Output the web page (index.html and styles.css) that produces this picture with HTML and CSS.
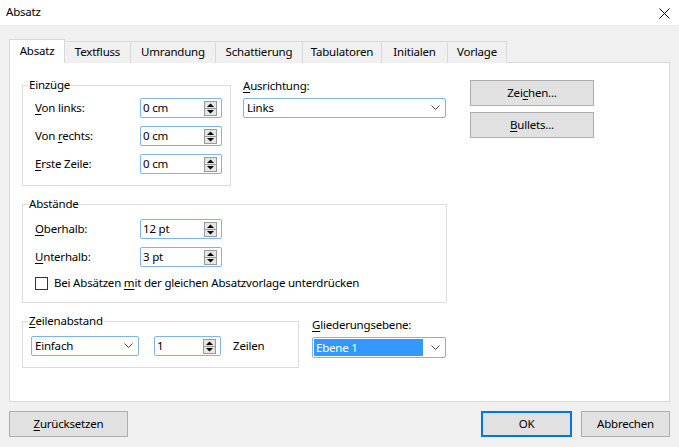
FILE: index.html
```html
<!DOCTYPE html>
<html>
<head>
<meta charset="utf-8">
<link rel="stylesheet" href="styles.css">
</head>
<body>
<div class="dialog">
  <div class="titlebar">
    <span class="title">Absatz</span>
    <svg class="close" width="11" height="11" viewBox="0 0 11 11"><path d="M0.5 0.5L10.5 10.5M10.5 0.5L0.5 10.5" stroke="#000" stroke-width="1" fill="none"/></svg>
  </div>
  <div class="main">
    <div class="tabs">
      <div class="tab sel w-absatz">Absatz</div>
      <div class="tab w-textfluss">Textfluss</div>
      <div class="tab w-umrandung">Umrandung</div>
      <div class="tab w-schatt">Schattierung</div>
      <div class="tab w-tab">Tabulatoren</div>
      <div class="tab w-init">Initialen</div>
      <div class="tab w-vorlage">Vorlage</div>
    </div>
    <div class="panel">
      <div class="row1">
        <fieldset class="grp einz">
          <legend>Einzüge</legend>
          <div class="field"><span class="lbl"><u>V</u>on links:</span><div class="spin w82"><span class="val">0 cm</span><svg width="13" height="15" viewBox="0 0 13 15"><rect x="0.5" y="0.5" width="12" height="14" fill="#e6e6e6" stroke="#9a9a9a"/><line x1="1" y1="7.5" x2="12" y2="7.5" stroke="#9a9a9a"/><path d="M3 6L6.5 2.5L10 6Z" fill="#000"/><path d="M3 9L6.5 12.5L10 9Z" fill="#000"/></svg></div></div>
          <div class="field"><span class="lbl">Von <u>r</u>echts:</span><div class="spin w82"><span class="val">0 cm</span><svg width="13" height="15" viewBox="0 0 13 15"><rect x="0.5" y="0.5" width="12" height="14" fill="#e6e6e6" stroke="#9a9a9a"/><line x1="1" y1="7.5" x2="12" y2="7.5" stroke="#9a9a9a"/><path d="M3 6L6.5 2.5L10 6Z" fill="#000"/><path d="M3 9L6.5 12.5L10 9Z" fill="#000"/></svg></div></div>
          <div class="field"><span class="lbl"><u>E</u>rste Zeile:</span><div class="spin w82"><span class="val">0 cm</span><svg width="13" height="15" viewBox="0 0 13 15"><rect x="0.5" y="0.5" width="12" height="14" fill="#e6e6e6" stroke="#9a9a9a"/><line x1="1" y1="7.5" x2="12" y2="7.5" stroke="#9a9a9a"/><path d="M3 6L6.5 2.5L10 6Z" fill="#000"/><path d="M3 9L6.5 12.5L10 9Z" fill="#000"/></svg></div></div>
        </fieldset>
        <div class="col-align">
          <div class="clabel"><u>A</u>usrichtung:</div>
          <div class="select sel-align"><span class="val">Links</span><svg width="9" height="6" viewBox="0 0 9 6"><path d="M0.5 0.5L4.5 4.5L8.5 0.5" fill="none" stroke="#444"/></svg></div>
        </div>
        <div class="col-btns">
          <div class="btn">Zei<u>c</u>hen...</div>
          <div class="btn"><u>B</u>ullets...</div>
        </div>
      </div>
      <fieldset class="grp abst">
        <legend>Abstände</legend>
        <div class="field"><span class="lbl"><u>O</u>berhalb:</span><div class="spin w82"><span class="val">12 pt</span><svg width="13" height="15" viewBox="0 0 13 15"><rect x="0.5" y="0.5" width="12" height="14" fill="#e6e6e6" stroke="#9a9a9a"/><line x1="1" y1="7.5" x2="12" y2="7.5" stroke="#9a9a9a"/><path d="M3 6L6.5 2.5L10 6Z" fill="#000"/><path d="M3 9L6.5 12.5L10 9Z" fill="#000"/></svg></div></div>
        <div class="field"><span class="lbl"><u>U</u>nterhalb:</span><div class="spin w82"><span class="val">3 pt</span><svg width="13" height="15" viewBox="0 0 13 15"><rect x="0.5" y="0.5" width="12" height="14" fill="#e6e6e6" stroke="#9a9a9a"/><line x1="1" y1="7.5" x2="12" y2="7.5" stroke="#9a9a9a"/><path d="M3 6L6.5 2.5L10 6Z" fill="#000"/><path d="M3 9L6.5 12.5L10 9Z" fill="#000"/></svg></div></div>
        <div class="check"><span class="box"></span><span>Bei Absätzen <u>m</u>it der gleichen Absatzvorlage unterdrücken</span></div>
      </fieldset>
      <div class="row3">
        <fieldset class="grp zeil">
          <legend><u>Z</u>eilenabstand</legend>
          <div class="zrow">
            <div class="select sel-einfach"><span class="val">Einfach</span><svg width="9" height="6" viewBox="0 0 9 6"><path d="M0.5 0.5L4.5 4.5L8.5 0.5" fill="none" stroke="#444"/></svg></div>
            <div class="spin w67"><span class="val">1</span><svg width="13" height="15" viewBox="0 0 13 15"><rect x="0.5" y="0.5" width="12" height="14" fill="#e6e6e6" stroke="#9a9a9a"/><line x1="1" y1="7.5" x2="12" y2="7.5" stroke="#9a9a9a"/><path d="M3 6L6.5 2.5L10 6Z" fill="#000"/><path d="M3 9L6.5 12.5L10 9Z" fill="#000"/></svg></div>
            <span class="zeilen">Zeilen</span>
          </div>
        </fieldset>
        <div class="col-glied">
          <div class="clabel"><u>G</u>liederungsebene:</div>
          <div class="select sel-glied"><span class="hl">Ebene 1</span><svg width="9" height="6" viewBox="0 0 9 6"><path d="M0.5 0.5L4.5 4.5L8.5 0.5" fill="none" stroke="#444"/></svg></div>
        </div>
      </div>
    </div>
    <div class="footer">
      <div class="btn fbtn reset"><u>Z</u>urücksetzen</div>
      <div class="right">
        <div class="btn fbtn ok">OK</div>
        <div class="btn fbtn cancel">Abbrechen</div>
      </div>
    </div>
  </div>
</div>
</body>
</html>
```

FILE: styles.css
```css
body {
  margin: 0;
  font-family: "Noto Sans", "DejaVu Sans", sans-serif;
  font-size: 11.5px;
  letter-spacing: -0.2px;
  line-height: 16px;
  color: #000;
}
u { text-decoration-thickness: 1px; text-underline-offset: 2px; }
.dialog {
  width: 679px;
  height: 447px;
  background: #f0f0f0;
  display: flex;
  flex-direction: column;
  overflow: hidden;
}
.titlebar {
  height: 25px;
  background: #fff;
  display: flex;
  align-items: center;
  justify-content: space-between;
  padding: 0 9px 0 6px;
  flex: none;
}
.title { margin-top: -1px; }
.close { margin-top: 1px; }
.main {
  padding: 14px 0 0 9px;
  flex: 1;
}
.tabs {
  display: flex;
  align-items: flex-end;
  height: 24px;
}
.tab {
  box-sizing: border-box;
  height: 22px;
  border: 1px solid #d9d9d9;
  border-bottom: none;
  margin-left: -1px;
  display: flex;
  align-items: center;
  justify-content: center;
  background: #f0f0f0;
  padding-bottom: 1px;
}
.tab.sel {
  height: 24px;
  margin-left: 0;
  background: #fff;
  position: relative;
  z-index: 1;
  padding-bottom: 2px;
}
.w-absatz { width: 56px; }
.w-textfluss { width: 67px; }
.w-umrandung { width: 86px; }
.w-schatt { width: 88px; }
.w-tab { width: 80px; }
.w-init { width: 67px; }
.w-vorlage { width: 60px; }

.panel {
  margin-top: -1px;
  width: 661px;
  height: 340px;
  box-sizing: border-box;
  border: 1px solid #d9d9d9;
  background: #fff;
  padding: 14px 0 0 12px;
}
.row1 { display: flex; align-items: flex-start; }
.grp {
  margin: 0;
  border: 1px solid #dcdcdc;
  box-sizing: border-box;
  min-width: 0;
}
.grp legend { padding: 0 1px; line-height: 16px; }
.einz { width: 209px; padding: 5px 7px 11px 5px; }
.einz .field, .abst .field, .abst .check { margin-left: 7px; }
.field { display: flex; align-items: center; height: 20px; }
.field + .field { margin-top: 8px; }
.lbl { width: 105px; flex: none; }

.spin, .select {
  box-sizing: border-box;
  height: 20px;
  border: 1px solid #7eb4ea;
  border-radius: 2px;
  background: #fff;
  display: flex;
  align-items: center;
  justify-content: space-between;
}
.spin { padding: 0 4px 0 2px; }
.spin svg { display: block; }
.w82 { width: 82px; }
.w67 { width: 67px; }
.select { padding: 0 5px 0 3px; }
.select svg { display: block; }

.col-align { width: 203px; margin-left: 12px; }
.clabel { margin-top: 1px; }
.col-align .select { margin-top: 4px; }
.col-btns { width: 124px; margin-left: 24px; padding-top: 3px; }
.btn {
  box-sizing: border-box;
  height: 26px;
  border: 1px solid #adadad;
  background: #e1e1e1;
  display: flex;
  align-items: center;
  justify-content: center;
}
.col-btns .btn + .btn { margin-top: 6px; }

.abst {
  width: 425px;
  margin-top: 10px;
  padding: 7px 0 11px 5px;
}
.check { display: flex; align-items: center; margin-top: 8px; height: 16px; }
.box {
  box-sizing: border-box;
  width: 13px;
  height: 13px;
  border: 1px solid #333;
  background: #fff;
  margin-right: 6px;
}

.row3 { display: flex; align-items: flex-start; margin-top: 10px; }
.zeil { width: 277px; padding: 7px 0 11px 5px; }
.zrow { display: flex; align-items: center; padding-left: 3px; }
.sel-einfach { width: 108px; }
.zrow .spin { margin-left: 15px; }
.zeilen { margin-left: 12px; }

.col-glied { width: 134px; margin-left: 13px; }
.col-glied .clabel { margin-top: 4px; }
.sel-glied { margin-top: 4px; height: 21px; padding: 0 5px 0 1px; }
.hl {
  background: #3399ff;
  color: #fff;
  width: 109px;
  height: 17px;
  line-height: 17px;
  padding-left: 2px;
  box-sizing: border-box;
}

.footer {
  display: flex;
  justify-content: space-between;
  width: 661px;
  margin-top: 9px;
}
.fbtn { height: 26px; }
.reset { width: 119px; }
.right { display: flex; }
.ok { width: 91px; border: 2px solid #0078d7; }
.cancel { width: 89px; margin-left: 9px; }
```
